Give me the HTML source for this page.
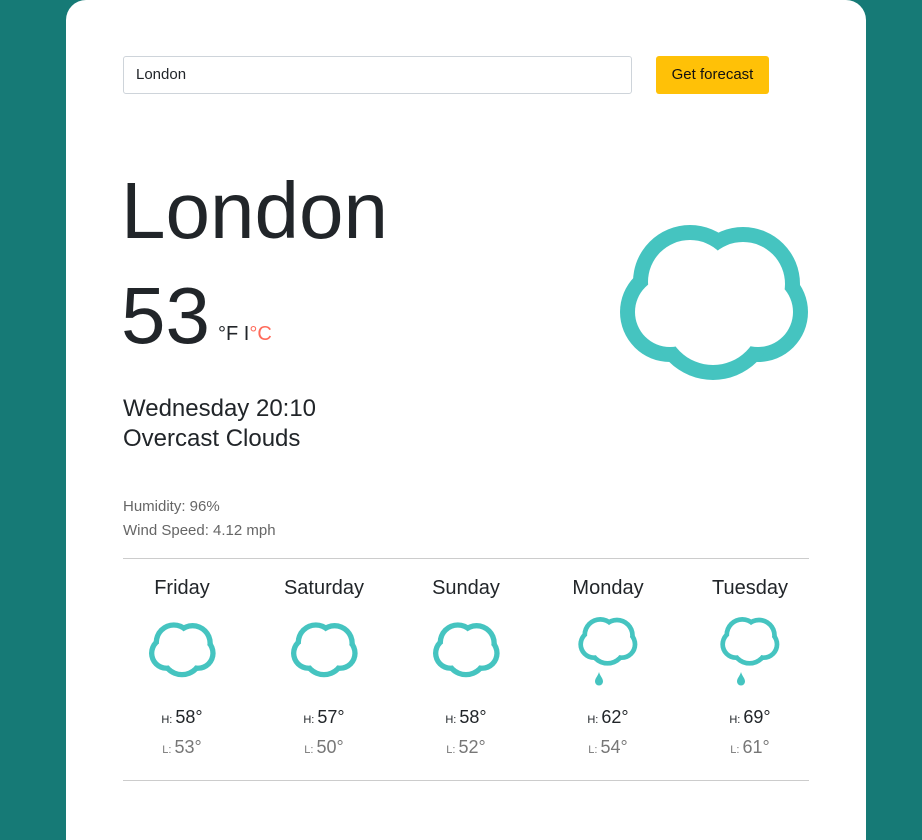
<!DOCTYPE html>
<html><head><style>
body{margin:0;width:922px;height:798px;background:#167a76;font-family:"Liberation Sans",sans-serif;overflow:hidden;position:relative;color:#212529}
.card{position:absolute;left:66px;top:0;width:800px;height:840px;background:#fff;border-top-left-radius:20px;border-top-right-radius:20px}
.abs{position:absolute;white-space:nowrap}
.inp{left:123px;top:56px;border:1px solid #ced4da;border-radius:3px;font-size:15px;line-height:36px;padding-left:12px;box-sizing:border-box;width:509px;height:38px}
.btn{left:656px;top:56px;width:113px;height:38px;background:#ffc107;border-radius:3px;font-size:15px;line-height:38px;text-align:center;color:#111}
.hr{left:123px;width:686px;height:1px;background:#ccc}
.day{width:142px;text-align:center}
</style></head><body>
<div class="card"></div>
<div class="abs inp">London</div>
<div class="abs btn">Get forecast</div>
<div class="abs" style="left:121px;top:165px;font-size:80px;line-height:92px">London</div>
<div class="abs" style="left:121px;top:270px;font-size:80px;line-height:92px">53</div>
<div class="abs" style="left:218px;top:323px;font-size:20px">°F I<span style="color:#ff6b5b">°C</span></div>
<div class="abs" style="left:123px;top:394px;font-size:24px;line-height:30px">Wednesday 20:10<br>Overcast Clouds</div>
<div class="abs" style="left:123px;top:495px;font-size:15px;line-height:24px;color:#666">Humidity: 96%<br>Wind Speed: 4.12 mph</div>
<svg width="0" height="0" style="position:absolute"><defs><g id="cl">
<g fill="#45c4c0"><circle cx="690" cy="282" r="57"/><circle cx="743" cy="284" r="57"/><circle cx="670" cy="312" r="50"/><circle cx="758" cy="312" r="50"/><circle cx="713" cy="318" r="62"/></g>
<g fill="#fff"><circle cx="690" cy="282" r="42"/><circle cx="743" cy="284" r="42"/><circle cx="670" cy="312" r="35"/><circle cx="758" cy="312" r="35"/><circle cx="713" cy="318" r="47"/></g>
</g></defs></svg>
<svg class="abs" style="left:620px;top:225px" width="189" height="156" viewBox="620 225 189 156"><use href="#cl"/></svg>
<div class="abs hr" style="top:558px"></div>
<div class="abs hr" style="top:780px"></div>
<div id="f"></div>
<script>
var d=[["Friday",58,53,0],["Saturday",57,50,0],["Sunday",58,52,0],["Monday",62,54,1],["Tuesday",69,61,1]];
var h="";
d.forEach(function(x,i){var L=111+142*i;var cx=L+71;
h+='<div class="abs day" style="left:'+L+'px;top:577px;font-size:20px">'+x[0]+'</div>';
if(x[3]){h+='<svg class="abs" style="left:'+(cx-30)+'px;top:617px" width="60" height="49" viewBox="620 225 189 156"><use href="#cl"/></svg>';
h+='<svg class="abs" style="left:'+(cx-14)+'px;top:672px" width="10" height="14" viewBox="0 0 10 14"><path d="M5 0 C6 4 9 6 9 9.5 A4 4 0 0 1 1 9.5 C1 6 4 4 5 0Z" fill="#45c4c0"/></svg>';}
else h+='<svg class="abs" style="left:'+(cx-33)+'px;top:622px" width="67" height="56" viewBox="620 225 189 156"><use href="#cl"/></svg>';
h+='<div class="abs day" style="left:'+L+'px;top:707px;font-size:18px"><span style="font-size:11px">H: </span>'+x[1]+'°</div>';
h+='<div class="abs day" style="left:'+L+'px;top:737px;font-size:18px;color:#777"><span style="font-size:11px">L: </span>'+x[2]+'°</div>';
});
document.getElementById("f").innerHTML=h;
</script>
</body></html>
